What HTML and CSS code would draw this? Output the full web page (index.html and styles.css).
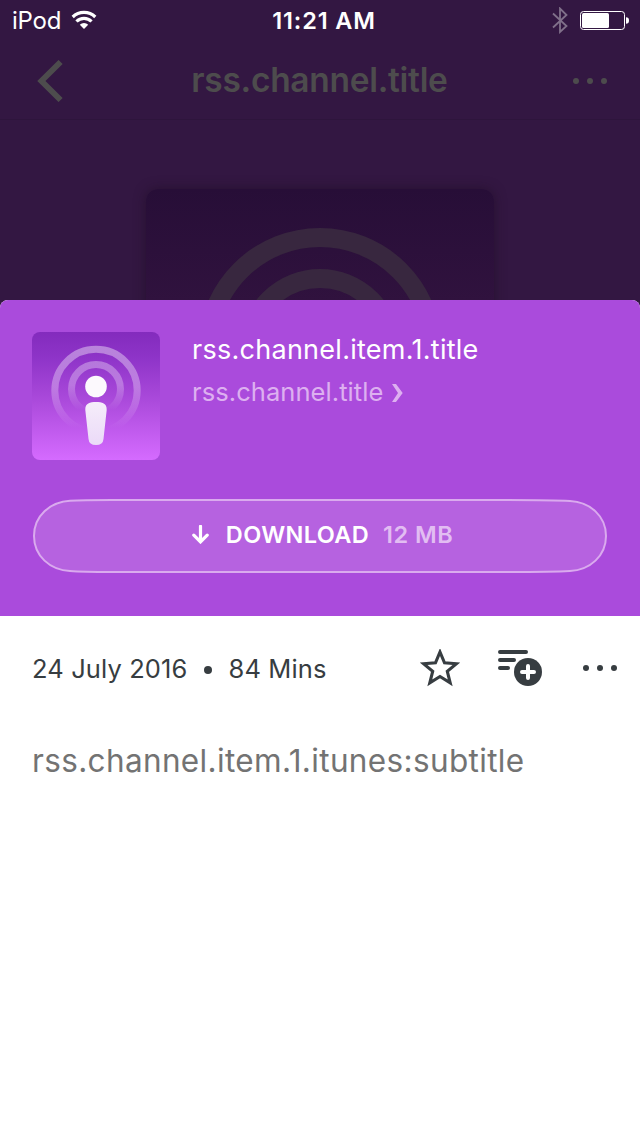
FILE: index.html
```html
<!DOCTYPE html>
<html lang="en">
<head>
<meta charset="utf-8">
<title>Episode</title>
<link rel="stylesheet" href="styles.css">
</head>
<body>
<div class="screen">
  <div class="status">
    <div class="status-left">
      <span class="carrier">iPod</span>
      <svg class="wifi" width="26" height="20" viewBox="0 0 26 20"><g fill="none" stroke="#fff" stroke-width="3.2"><path d="M1.7 7A16.2 16.2 0 0 1 24.3 7"/><path d="M5.5 11.5A10.4 10.4 0 0 1 20.5 11.5"/></g><path d="M8.8 14.8A6 6 0 0 1 17.2 14.8L13 19Z" fill="#fff"/></svg>
    </div>
    <span class="clock">11:21 AM</span>
    <div class="status-right">
      <svg width="16" height="27" viewBox="0 0 16 27"><path d="M1 6.5L14.5 19L8 25V1.5L14.5 8L1 20.5" fill="none" stroke="#80708a" stroke-width="1.8"/></svg>
      <svg width="49" height="19" viewBox="0 0 49 19"><rect x=".5" y=".5" width="44" height="18" rx="3" fill="none" stroke="#fff"/><rect x="2" y="2" width="27" height="15" rx="1.5" fill="#fff"/><path d="M46 6.2Q49 6.2 49 9.5T46 12.8Z" fill="#fff"/></svg>
    </div>
  </div>
  <div class="nav">
    <svg width="26" height="42" viewBox="0 0 26 42"><path d="M23.6 2L4.4 21L23.6 40" fill="none" stroke="#4d4c4d" stroke-width="5.8"/></svg>
    <span class="nav-title">rss.channel.title</span>
    <svg width="34" height="6" viewBox="0 0 34 6" fill="#4d4c4d"><circle cx="3" cy="3" r="3"/><circle cx="17" cy="3" r="3"/><circle cx="31" cy="3" r="3"/></svg>
  </div>
  <div class="backdrop">
    <div class="cover">
      <svg width="348" height="348" viewBox="0 0 348 348"><g fill="none" stroke="#38273f" stroke-width="19"><circle cx="174" cy="161" r="112.5"/><circle cx="174" cy="161" r="71.5"/></g></svg>
    </div>
  </div>
  <div class="sheet">
    <div class="hero">
      <div class="episode">
        <svg class="art" width="128" height="128" viewBox="0 0 128 128">
          <defs>
            <linearGradient id="bg" x2="0" y2="1"><stop offset="0" stop-color="#832bbd"/><stop offset=".2" stop-color="#8e34c8"/><stop offset=".55" stop-color="#ac4bdc"/><stop offset="1" stop-color="#d56bff"/></linearGradient>
            <linearGradient id="outer" gradientUnits="userSpaceOnUse" x1="0" y1="14" x2="0" y2="96"><stop offset="0" stop-color="#fff" stop-opacity=".41"/><stop offset=".5" stop-color="#fff" stop-opacity=".3"/><stop offset="1" stop-color="#fff" stop-opacity="0"/></linearGradient>
            <linearGradient id="inner" gradientUnits="userSpaceOnUse" x1="0" y1="28" x2="0" y2="78"><stop offset="0" stop-color="#fff" stop-opacity=".34"/><stop offset=".5" stop-color="#fff" stop-opacity=".28"/><stop offset="1" stop-color="#fff" stop-opacity="0"/></linearGradient>
            <linearGradient id="body" x2="0" y2="1"><stop offset="0" stop-color="#f5edfa"/><stop offset="1" stop-color="#ebdaf8"/></linearGradient>
          </defs>
          <rect width="128" height="128" rx="8" fill="url(#bg)"/>
          <circle cx="64" cy="58.5" r="41.2" fill="none" stroke="url(#outer)" stroke-width="7"/>
          <circle cx="64" cy="57" r="24.5" fill="none" stroke="url(#inner)" stroke-width="7"/>
          <circle cx="64" cy="54.5" r="10.8" fill="#fcf9fd"/>
          <path d="M53.3 78C53 71 58 70 64 70S75 71 74.7 78L71.5 107Q71 113 64 113T56.5 107Z" fill="url(#body)"/>
        </svg>
        <div class="titles">
          <div class="episode-title">rss.channel.item.1.title</div>
          <div class="show"><span class="show-title">rss.channel.title</span><svg width="11" height="18" viewBox="0 0 11 18"><path d="M0 0H4L10.7 9L4 18H0L6 9Z" fill="#ddb0f0"/></svg></div>
        </div>
      </div>
      <div class="download">
        <svg class="pill" width="576" height="76" viewBox="0 0 576 76"><path d="M80 2H470Q520 2 538 3C558 4 574 18 574 38S558 72 538 73Q520 74 470 74H80Q50 74 38 73C18 72 2 58 2 38S18 4 38 2.8Q50 2 80 2Z"/></svg>
        <svg width="17" height="19" viewBox="0 0 17 19"><path d="M8.5 1.3V16M1.8 10.2L8.5 16.9L15.2 10.2" fill="none" stroke="#fff" stroke-width="3.2" stroke-linecap="round"/></svg>
        <span class="download-label">DOWNLOAD</span>
        <span class="download-size">12 MB</span>
      </div>
    </div>
    <div class="meta">
      <span class="date">24 July 2016</span>
      <span class="dot"></span>
      <span class="duration">84 Mins</span>
      <div class="actions">
        <svg width="40" height="38" viewBox="0 0 40 38"><path d="M20 3L24.5 13.8L36.5 14.7L27.3 22.3L30.2 33.8L20 27.5L9.8 33.8L12.7 22.3L3.5 14.7L15.5 13.8Z" fill="none" stroke="#373d41" stroke-width="3.1"/></svg>
        <svg width="44" height="36" viewBox="0 0 44 36"><path d="M2 2H28M2 10H16M2 18H10" stroke="#373d41" stroke-width="4" stroke-linecap="round"/><circle cx="30" cy="22" r="14" fill="#373d41"/><path d="M30 16V28M24 22H36" stroke="#fff" stroke-width="4" stroke-linecap="round"/></svg>
        <svg width="34" height="6" viewBox="0 0 34 6" fill="#373d41"><circle cx="3" cy="3" r="3"/><circle cx="17" cy="3" r="3"/><circle cx="31" cy="3" r="3"/></svg>
      </div>
    </div>
    <p class="subtitle">rss.channel.item.1.itunes:subtitle</p>
  </div>
</div>
</body>
</html>
```
FILE: styles.css
```css
* { box-sizing: border-box; }
body { margin: 0; font-family: Inter, "Liberation Sans", sans-serif; }
svg { display: block; flex: none; }
span { white-space: nowrap; }
.screen { width: 640px; height: 1136px; overflow: hidden; background: #331742; display: flex; flex-direction: column; }
.status { height: 40px; display: grid; grid-template-columns: 1fr auto 1fr; align-items: center; padding: 0 11px 0 12px; color: #fff; font-size: 24px; }
.status-left { display: flex; align-items: center; gap: 10px; }
.carrier { letter-spacing: -.25px; }
.clock { font-weight: 600; font-size: 23.5px; letter-spacing: .85px; padding: 1px 0 0 7px; }
.status-right { display: flex; align-items: center; justify-content: flex-end; gap: 12px; }
.nav { height: 80px; padding: 2px 33px 0 37px; display: flex; align-items: center; justify-content: space-between; color: #4d4c4d; border-bottom: 1px solid #2e153c; }
.nav-title { font-size: 33.5px; font-weight: 600; letter-spacing: -.3px; padding: 0 0 1px 3px; }
.backdrop { height: 180px; flex: none; overflow: hidden; padding-top: 69px; display: flex; justify-content: center; align-items: flex-start; }
.cover { width: 348px; height: 348px; border-radius: 12px; background: linear-gradient(#270e37, #351442 50%); box-shadow: 0 0 12px rgba(30, 14, 35, .6); flex: none; }
.sheet { flex: 1; background: #fff; border-radius: 8px 8px 0 0; overflow: hidden; }
.hero { height: 316px; background: #aa4bdc; padding: 32px; }
.episode { display: flex; gap: 32px; }
.titles { color: #fff; }
.episode-title { font-size: 27px; line-height: 36px; letter-spacing: .27px; }
.show { display: flex; align-items: center; gap: 9px; margin-top: 6px; color: #ddb0f0; }
.show-title { font-size: 25.5px; line-height: 36px; letter-spacing: .07px; padding-bottom: 1px; }
.download { position: relative; height: 76px; margin-top: 38px; display: flex; align-items: center; justify-content: center; font-weight: 600; font-size: 23.5px; padding: 0 0 3px 5px; }
.pill { position: absolute; left: 0; top: 0; fill: #b662e0; stroke: #daaaee; stroke-width: 2; }
.download > :not(.pill) { position: relative; }
.download-label { color: #fff; margin-left: 17px; letter-spacing: .35px; }
.download-size { color: #e2bdf2; margin-left: 14px; font-weight: 600; letter-spacing: .5px; }
.meta { height: 104px; padding: 0 23px 0 32px; display: flex; align-items: center; color: #373d41; font-size: 25.5px; letter-spacing: .12px; }
.dot { width: 8px; height: 8px; border-radius: 50%; background: #373d41; margin: 4px 17px 0 16px; }
.actions { display: flex; align-items: center; margin-left: auto; }
.actions svg + svg { margin-left: 38px; }
.actions svg:last-child { margin-left: 41px; }
.subtitle { margin: 19px 32px 0; font-size: 31.5px; line-height: 44px; color: #737373; letter-spacing: .35px; }
```
